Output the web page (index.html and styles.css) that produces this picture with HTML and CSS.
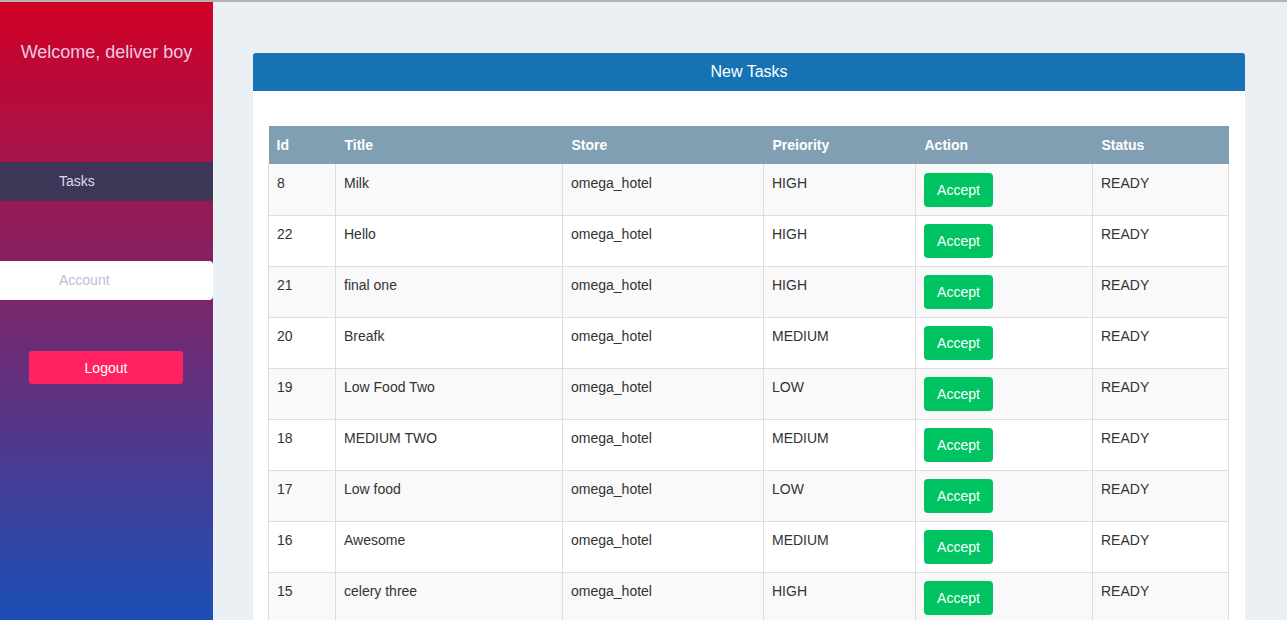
FILE: index.html
```html
<!DOCTYPE html>
<html>
<head>
<meta charset="utf-8">
<title>Deliver boy</title>
<link rel="stylesheet" href="styles.css">
</head>
<body>
<div class="app">
  <aside class="sidebar">
    <h2 class="welcome">Welcome, deliver boy</h2>
    <nav class="nav">
      <a class="nav-item nav-tasks">Tasks</a>
      <a class="nav-item nav-account">Account</a>
    </nav>
    <button class="logout">Logout</button>
  </aside>
  <main class="main">
    <section class="card">
      <div class="card-header">New Tasks</div>
      <div class="card-body">
        <table class="tasks">
          <colgroup>
            <col class="c-id"><col class="c-title"><col class="c-store"><col class="c-prio"><col class="c-action"><col class="c-status">
          </colgroup>
          <thead>
            <tr><th>Id</th><th>Title</th><th>Store</th><th>Preiority</th><th>Action</th><th>Status</th></tr>
          </thead>
          <tbody>
            <tr><td>8</td><td>Milk</td><td>omega_hotel</td><td>HIGH</td><td><button class="accept">Accept</button></td><td>READY</td></tr>
            <tr><td>22</td><td>Hello</td><td>omega_hotel</td><td>HIGH</td><td><button class="accept">Accept</button></td><td>READY</td></tr>
            <tr><td>21</td><td>final one</td><td>omega_hotel</td><td>HIGH</td><td><button class="accept">Accept</button></td><td>READY</td></tr>
            <tr><td>20</td><td>Breafk</td><td>omega_hotel</td><td>MEDIUM</td><td><button class="accept">Accept</button></td><td>READY</td></tr>
            <tr><td>19</td><td>Low Food Two</td><td>omega_hotel</td><td>LOW</td><td><button class="accept">Accept</button></td><td>READY</td></tr>
            <tr><td>18</td><td>MEDIUM TWO</td><td>omega_hotel</td><td>MEDIUM</td><td><button class="accept">Accept</button></td><td>READY</td></tr>
            <tr><td>17</td><td>Low food</td><td>omega_hotel</td><td>LOW</td><td><button class="accept">Accept</button></td><td>READY</td></tr>
            <tr><td>16</td><td>Awesome</td><td>omega_hotel</td><td>MEDIUM</td><td><button class="accept">Accept</button></td><td>READY</td></tr>
            <tr><td>15</td><td>celery three</td><td>omega_hotel</td><td>HIGH</td><td><button class="accept">Accept</button></td><td>READY</td></tr>
          </tbody>
        </table>
      </div>
    </section>
  </main>
</div>
</body>
</html>
```

FILE: styles.css
```css
* { box-sizing: border-box; }
html, body { margin: 0; padding: 0; }
body {
  font-family: "Liberation Sans", Arial, sans-serif;
  font-size: 14px;
  line-height: 20px;
  color: #333;
  border-top: 2px solid #b3b3b3;
  background: #ebf0f4;
}
.app {
  display: flex;
  height: calc(100vh - 2px);
  overflow: hidden;
}
.sidebar {
  width: 213px;
  flex: 0 0 213px;
  background: linear-gradient(to bottom, #d20026 0%, #1b4fb6 100%);
  padding-top: 39px;
  display: flex;
  flex-direction: column;
}
.welcome {
  margin: 0;
  font-size: 18px;
  line-height: 22px;
  font-weight: normal;
  text-align: center;
  color: #eccbe0;
}
.nav {
  margin-top: 99px;
  display: flex;
  flex-direction: column;
  gap: 60px;
}
.nav-item {
  display: block;
  height: 39px;
  line-height: 39px;
  padding-left: 59px;
  font-size: 14px;
}
.nav-tasks {
  background: #3c3757;
  color: #ddd7ee;
}
.nav-account {
  background: #fff;
  color: #c0badb;
  border-radius: 0 4px 4px 0;
}
.logout {
  margin: 51px 0 0 29px;
  width: 154px;
  height: 33px;
  border: none;
  border-radius: 3px;
  background: #ff2160;
  color: #fff;
  font-family: inherit;
  font-size: 14px;
}
.main {
  flex: 1;
  padding: 51px 42px 0 40px;
}
.card {
  width: 992px;
  background: #fff;
  border-radius: 3px 3px 0 0;
}
.card-header {
  height: 38px;
  line-height: 38px;
  background: #1672b3;
  color: #fff;
  text-align: center;
  font-size: 16px;
  border-radius: 3px 3px 0 0;
}
.card-body {
  padding: 35px 16px 15px 15px;
}
.tasks {
  width: 960px;
  table-layout: fixed;
  border-collapse: collapse;
}
.c-id { width: 67px; }
.c-title { width: 227px; }
.c-store { width: 201px; }
.c-prio { width: 152px; }
.c-action { width: 177px; }
.c-status { width: 136px; }
.tasks th {
  background: #819fb2;
  color: #fff;
  font-weight: bold;
  text-align: left;
  padding: 9px 9px 9px;
  line-height: 20px;
}
.tasks th:first-child { padding-left: 8px; }
.tasks td {
  border: 1px solid #dddddd;
  padding: 8px;
  vertical-align: top;
  height: 51px;
  line-height: 20px;
}
.tasks tbody tr:first-child td {
  border-top: none;
  padding-top: 9px;
}
.tasks tbody tr:nth-child(odd) td { background: #f9f9f9; }
.accept {
  display: block;
  width: 69px;
  height: 34px;
  border: none;
  border-radius: 4px;
  background: #00c462;
  color: #fff;
  font-family: inherit;
  font-size: 14px;
  padding: 0;
}
```
